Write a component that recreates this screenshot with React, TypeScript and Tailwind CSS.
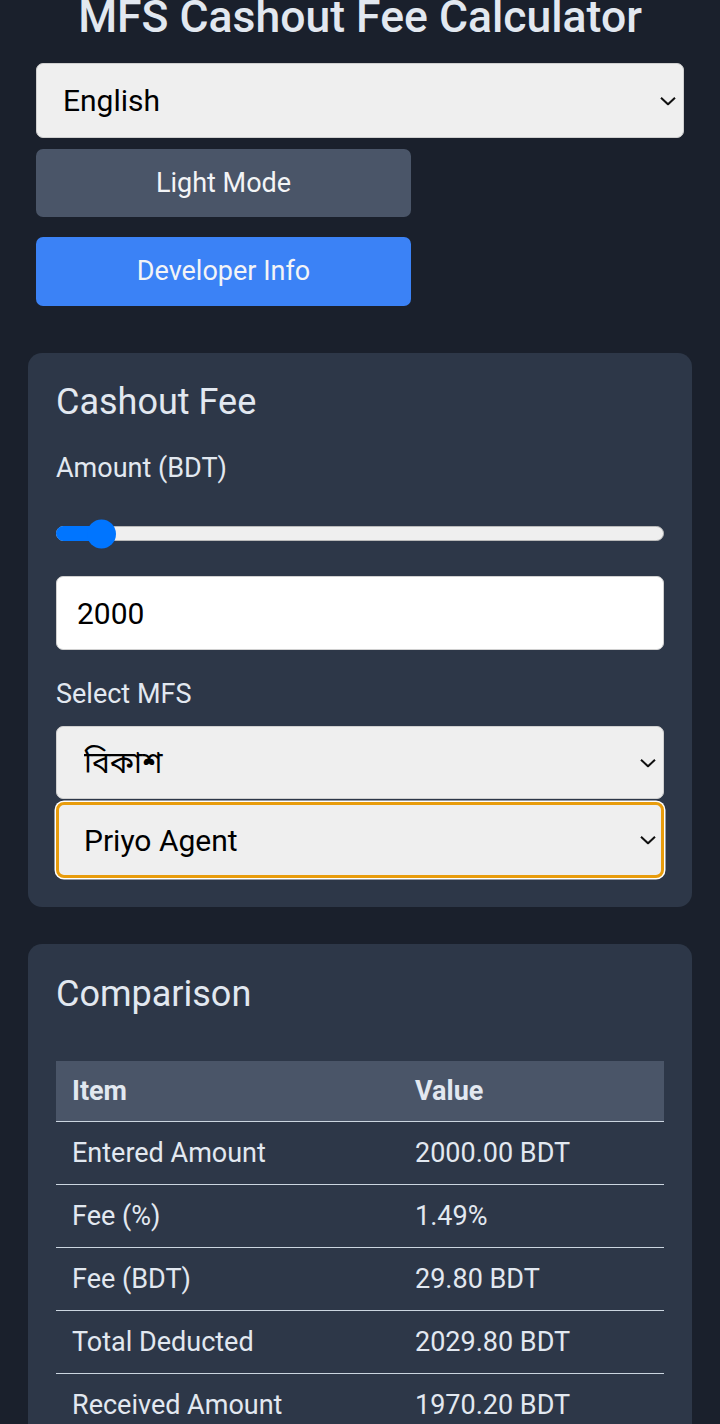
import React, { useState } from "react"

// petite flèche façon select natif
function Chevron() {
  return (
    <svg
      className="pointer-events-none absolute right-[8px] top-1/2 -translate-y-1/2"
      width="16"
      height="9"
      viewBox="0 0 16 9"
      fill="none"
    >
      <path d="M1 1.2 8 7.8 15 1.2" stroke="#111" strokeWidth="2" />
    </svg>
  )
}

interface Row {
  item: string
  value: string
}

export default function App() {
  const [amount, setAmount] = useState("2000")
  const [lang, setLang] = useState("en")
  const [mfs, setMfs] = useState("bkash")
  const [agent, setAgent] = useState("priyo")

  const rows: Row[] = [
    { item: "Entered Amount", value: "2000.00 BDT" },
    { item: "Fee (%)", value: "1.49%" },
    { item: "Fee (BDT)", value: "29.80 BDT" },
    { item: "Total Deducted", value: "2029.80 BDT" },
    { item: "Received Amount", value: "1970.20 BDT" },
  ]

  return (
    <div className="min-h-screen flex flex-col bg-[#1a202c] px-[28px] pb-[40px] font-['Roboto','Noto_Sans','Noto_Sans_Bengali',sans-serif] text-[#e2e8f0]">
      <div className="flex flex-col px-[8px]">
        <h1 className="-mt-[5px] text-center text-[44.5px] leading-[45px] font-medium text-[#e2e8f0] whitespace-nowrap">
          MFS Cashout Fee Calculator
        </h1>

        <div className="relative mt-[23px]">
          <select
            value={lang}
            onChange={(e) => setLang(e.target.value)}
            className="w-full h-[75px] appearance-none bg-[#efefef] border border-[#cfcfcf] rounded-[7px] pl-[26px] text-[30px] text-black outline-none"
          >
            <option value="en">English</option>
            <option value="bn">বাংলা</option>
          </select>
          <Chevron />
        </div>

        <button className="mt-[11px] w-[375px] h-[68px] rounded-[7px] bg-[#4a5568] text-[27px] text-[#f3f4f6]">
          Light Mode
        </button>
        <button className="mt-[20px] w-[375px] h-[69px] rounded-[7px] bg-[#3b82f6] text-[27px] text-[#f3f4f6]">
          Developer Info
        </button>
      </div>

      {/* Carte calcul */}
      <div className="mt-[47px] rounded-[14px] bg-[#2d3748] px-[28px] pt-[29px] pb-[29px] flex flex-col">
        <h2 className="text-[36px] leading-[41px] font-normal">Cashout Fee</h2>
        <label className="mt-[29px] text-[27px] leading-[32px]">Amount (BDT)</label>

        <div className="mt-[35px] h-[29px] flex items-center">
          <div className="relative h-[15px] w-full rounded-full bg-[#efefef] border border-[#b9b9b9]">
            <div className="absolute -left-px -top-px -bottom-px w-[46px] rounded-l-full bg-[#0075ff]" />
            <div className="absolute left-[30px] top-1/2 -translate-y-1/2 w-[29px] h-[29px] rounded-full bg-[#0075ff]" />
          </div>
        </div>

        <input
          value={amount}
          onChange={(e) => setAmount(e.target.value)}
          className="mt-[28px] h-[74px] w-full bg-white border border-[#d0d0d0] rounded-[7px] px-[20px] text-[30px] text-black outline-none"
        />

        <label className="mt-[28px] text-[27px] leading-[32px]">Select MFS</label>

        <div className="relative mt-[16px]">
          <select
            value={mfs}
            onChange={(e) => setMfs(e.target.value)}
            className="w-full h-[73px] appearance-none bg-[#efefef] border border-[#cfcfcf] rounded-[7px] pl-[27px] text-[30px] text-black outline-none"
          >
            <option value="bkash">বিকাশ</option>
            <option value="nagad">নগদ</option>
          </select>
          <Chevron />
        </div>

        <div className="relative mt-[3px]">
          <select
            value={agent}
            onChange={(e) => setAgent(e.target.value)}
            className="w-full h-[76px] appearance-none bg-[#efefef] border-[3px] border-[#e89c0c] rounded-[8px] pl-[25px] text-[30px] text-black outline-none shadow-[0_0_0_1.5px_#ffffff]"
          >
            <option value="priyo">Priyo Agent</option>
            <option value="regular">Regular Agent</option>
          </select>
          <Chevron />
        </div>
      </div>

      {/* Carte comparaison */}
      <div className="mt-[37px] rounded-[14px] bg-[#2d3748] px-[28px] pt-[30px] pb-[29px] flex flex-col">
        <h2 className="text-[36px] leading-[41px] font-normal">Comparison</h2>
        <table className="mt-[46px] w-full table-fixed border-collapse text-[27px] leading-[32px]">
          <colgroup>
            <col className="w-[359px]" />
            <col />
          </colgroup>
          <thead>
            <tr className="bg-[#4a5568]">
              <th className="text-left font-bold px-[16px] py-[14px] border-b border-[#cbd5e0]">Item</th>
              <th className="text-left font-bold px-[0px] py-[14px] border-b border-[#cbd5e0]">Value</th>
            </tr>
          </thead>
          <tbody>
            {rows.map((r) => (
              <tr key={r.item}>
                <td className="px-[16px] py-[15px] border-b border-[#cbd5e0]">{r.item}</td>
                <td className="py-[15px] border-b border-[#cbd5e0]">{r.value}</td>
              </tr>
            ))}
          </tbody>
        </table>
      </div>
    </div>
  )
}
